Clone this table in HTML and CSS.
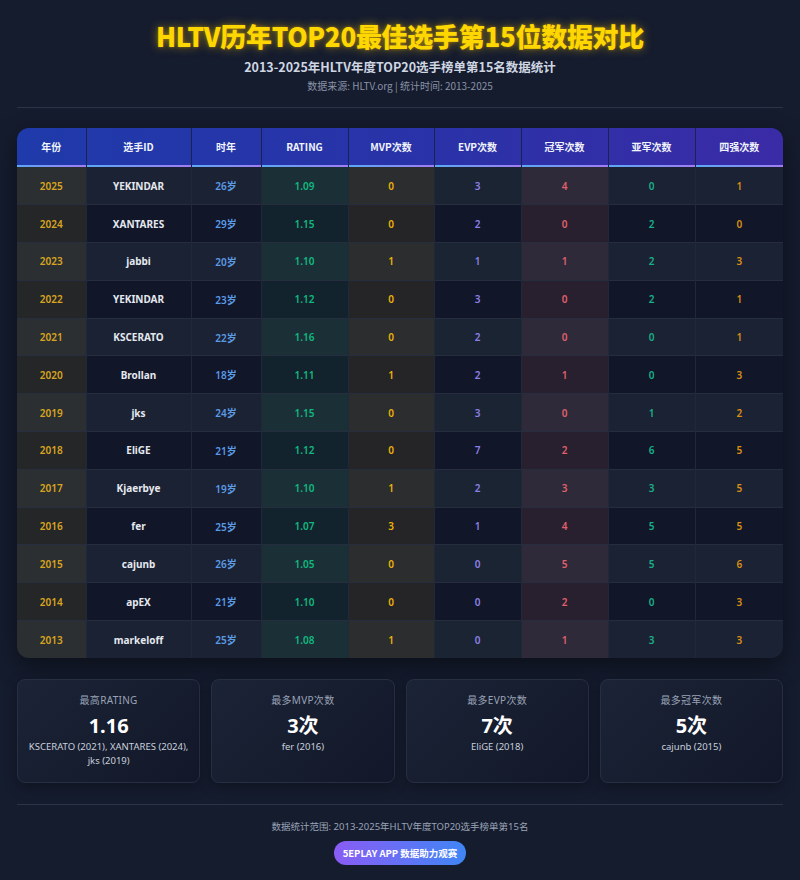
FILE: index.html
```html
<!DOCTYPE html>
<html lang="zh">
<head>
<meta charset="utf-8">
<link rel="stylesheet" href="styles.css">
</head>
<body>
<div class="page">
  <header class="head">
    <h1 class="title">HLTV历年TOP20最佳选手第15位数据对比</h1>
    <div class="subtitle">2013-2025年HLTV年度TOP20选手榜单第15名数据统计</div>
    <div class="source">数据来源: HLTV.org | 统计时间: 2013-2025</div>
  </header>

  <div class="table-wrap">
    <table class="data">
      <thead>
        <tr>
          <th>年份</th><th>选手ID</th><th>时年</th><th>RATING</th><th>MVP次数</th><th>EVP次数</th><th>冠军次数</th><th>亚军次数</th><th>四强次数</th>
        </tr>
      </thead>
      <tbody>
        <tr><td class="c-year">2025</td><td class="c-name">YEKINDAR</td><td class="c-age">26岁</td><td class="c-rt">1.09</td><td class="c-mvp">0</td><td class="c-evp">3</td><td class="c-ch">4</td><td class="c-ru">0</td><td class="c-t4">1</td></tr>
        <tr><td class="c-year">2024</td><td class="c-name">XANTARES</td><td class="c-age">29岁</td><td class="c-rt">1.15</td><td class="c-mvp">0</td><td class="c-evp">2</td><td class="c-ch">0</td><td class="c-ru">2</td><td class="c-t4">0</td></tr>
        <tr><td class="c-year">2023</td><td class="c-name">jabbi</td><td class="c-age">20岁</td><td class="c-rt">1.10</td><td class="c-mvp">1</td><td class="c-evp">1</td><td class="c-ch">1</td><td class="c-ru">2</td><td class="c-t4">3</td></tr>
        <tr><td class="c-year">2022</td><td class="c-name">YEKINDAR</td><td class="c-age">23岁</td><td class="c-rt">1.12</td><td class="c-mvp">0</td><td class="c-evp">3</td><td class="c-ch">0</td><td class="c-ru">2</td><td class="c-t4">1</td></tr>
        <tr><td class="c-year">2021</td><td class="c-name">KSCERATO</td><td class="c-age">22岁</td><td class="c-rt">1.16</td><td class="c-mvp">0</td><td class="c-evp">2</td><td class="c-ch">0</td><td class="c-ru">0</td><td class="c-t4">1</td></tr>
        <tr><td class="c-year">2020</td><td class="c-name">Brollan</td><td class="c-age">18岁</td><td class="c-rt">1.11</td><td class="c-mvp">1</td><td class="c-evp">2</td><td class="c-ch">1</td><td class="c-ru">0</td><td class="c-t4">3</td></tr>
        <tr><td class="c-year">2019</td><td class="c-name">jks</td><td class="c-age">24岁</td><td class="c-rt">1.15</td><td class="c-mvp">0</td><td class="c-evp">3</td><td class="c-ch">0</td><td class="c-ru">1</td><td class="c-t4">2</td></tr>
        <tr><td class="c-year">2018</td><td class="c-name">EliGE</td><td class="c-age">21岁</td><td class="c-rt">1.12</td><td class="c-mvp">0</td><td class="c-evp">7</td><td class="c-ch">2</td><td class="c-ru">6</td><td class="c-t4">5</td></tr>
        <tr><td class="c-year">2017</td><td class="c-name">Kjaerbye</td><td class="c-age">19岁</td><td class="c-rt">1.10</td><td class="c-mvp">1</td><td class="c-evp">2</td><td class="c-ch">3</td><td class="c-ru">3</td><td class="c-t4">5</td></tr>
        <tr><td class="c-year">2016</td><td class="c-name">fer</td><td class="c-age">25岁</td><td class="c-rt">1.07</td><td class="c-mvp">3</td><td class="c-evp">1</td><td class="c-ch">4</td><td class="c-ru">5</td><td class="c-t4">5</td></tr>
        <tr><td class="c-year">2015</td><td class="c-name">cajunb</td><td class="c-age">26岁</td><td class="c-rt">1.05</td><td class="c-mvp">0</td><td class="c-evp">0</td><td class="c-ch">5</td><td class="c-ru">5</td><td class="c-t4">6</td></tr>
        <tr><td class="c-year">2014</td><td class="c-name">apEX</td><td class="c-age">21岁</td><td class="c-rt">1.10</td><td class="c-mvp">0</td><td class="c-evp">0</td><td class="c-ch">2</td><td class="c-ru">0</td><td class="c-t4">3</td></tr>
        <tr><td class="c-year">2013</td><td class="c-name">markeloff</td><td class="c-age">25岁</td><td class="c-rt">1.08</td><td class="c-mvp">1</td><td class="c-evp">0</td><td class="c-ch">1</td><td class="c-ru">3</td><td class="c-t4">3</td></tr>
      </tbody>
    </table>
  </div>

  <section class="stats">
    <div class="card">
      <div class="card-label">最高RATING</div>
      <div class="card-value">1.16</div>
      <div class="card-desc">KSCERATO (2021), XANTARES (2024), jks (2019)</div>
    </div>
    <div class="card">
      <div class="card-label">最多MVP次数</div>
      <div class="card-value">3次</div>
      <div class="card-desc">fer (2016)</div>
    </div>
    <div class="card">
      <div class="card-label">最多EVP次数</div>
      <div class="card-value">7次</div>
      <div class="card-desc">EliGE (2018)</div>
    </div>
    <div class="card">
      <div class="card-label">最多冠军次数</div>
      <div class="card-value">5次</div>
      <div class="card-desc">cajunb (2015)</div>
    </div>
  </section>

  <footer class="foot">
    <div class="foot-text">数据统计范围: 2013-2025年HLTV年度TOP20选手榜单第15名</div>
    <div class="badge">5EPLAY APP 数据助力观赛</div>
  </footer>
</div>
</body>
</html>
```

FILE: styles.css
```css
* { box-sizing: border-box; }
html, body {
  margin: 0;
  padding: 0;
  background: #151c2e;
}
body {
  font-family: "Open Sans", "Noto Sans CJK SC", sans-serif;
  color: #e2e8f0;
  width: 800px;
  height: 880px;
  overflow: hidden;
}
.page {
  padding: 0 17px;
}
.head {
  text-align: center;
  padding-top: 19px;
  padding-bottom: 13px;
  border-bottom: 1px solid #2a3348;
}
.title {
  margin: 0;
  font-family: "Noto Sans CJK SC", sans-serif;
  font-size: 26px;
  font-weight: 900;
  line-height: 34px;
  color: #ffd700;
  text-shadow: 0 0 10px rgba(255, 200, 0, 0.55), 0 0 3px rgba(255, 180, 0, 0.4);
  letter-spacing: -0.3px;
}
.subtitle {
  margin-top: 5px;
  font-family: "Noto Sans CJK SC", sans-serif;
  font-size: 12.5px;
  font-weight: 700;
  line-height: 18px;
  color: #cfd6e2;
}
.source {
  margin-top: 2px;
  font-family: "Noto Sans CJK SC", sans-serif;
  font-size: 10px;
  line-height: 16px;
  color: #8a93a6;
}

.table-wrap {
  margin-top: 20px;
  border-radius: 12px;
  overflow: hidden;
  background: #141a2b;
  box-shadow: 0 8px 24px rgba(0, 0, 0, 0.45);
}
.data {
  width: 100%;
  border-collapse: collapse;
  table-layout: fixed;
  font-family: "Noto Sans", "Noto Sans CJK SC", sans-serif;
}
.data th:nth-child(1) { width: 69px; }
.data th:nth-child(2) { width: 105px; }
.data th:nth-child(3) { width: 70px; }
.data th:nth-child(4) { width: 87px; }
.data th:nth-child(5) { width: 86px; }
.data th:nth-child(6) { width: 87px; }
.data th:nth-child(7) { width: 87px; }
.data th:nth-child(8) { width: 87px; }
.data th:nth-child(9) { width: 88px; }

.data thead tr {
  background: linear-gradient(90deg, #1f3aaa 0%, #2a32a8 55%, #3a2ba6 100%);
}
.data th {
  height: 39px;
  padding: 0 0 2px;
  font-family: "Noto Sans CJK SC", sans-serif;
  font-size: 10px;
  font-weight: 700;
  color: #f1f4fb;
  text-align: center;
  border-left: 1px solid #1a2350;
  background-image: linear-gradient(90deg, #5aa9f5, #a27cf3);
  background-size: 100% 2px;
  background-position: bottom left;
  background-repeat: no-repeat;
}
.data th:first-child { border-left: none; }

.data td {
  height: 37.8px;
  padding: 0;
  text-align: center;
  font-size: 10px;
  font-weight: 600;
  border-top: 1px solid #262d3e;
  border-left: 1px solid #20283a;
}
.data td:first-child { border-left: none; }
.data tbody tr:first-child td { border-top: none; }
.data tbody tr:nth-child(odd) td { background-color: #1b2233; }
.data tbody tr:nth-child(even) td { background-color: #111629; }

.data tbody tr:nth-child(odd) .c-year { background-color: #2b2f31; }
.data tbody tr:nth-child(even) .c-year { background-color: #252628; }
.data tbody tr:nth-child(odd) .c-rt { background-color: #1b3036; }
.data tbody tr:nth-child(even) .c-rt { background-color: #13232d; }
.data tbody tr:nth-child(odd) .c-mvp { background-color: #2b2d2f; }
.data tbody tr:nth-child(even) .c-mvp { background-color: #252527; }
.data tbody tr:nth-child(odd) .c-evp { background-color: #1b2433; }
.data tbody tr:nth-child(even) .c-evp { background-color: #111629; }
.data tbody tr:nth-child(odd) .c-ch { background-color: #2e2a39; }
.data tbody tr:nth-child(even) .c-ch { background-color: #281f2f; }

.c-year { color: #d9a520; }
.c-name { color: #e4e8ef; }
.data .c-name { font-weight: 700; }
.c-age { color: #5b9be6; }
.c-rt { color: #10b981; }
.c-mvp { color: #eab308; }
.c-evp { color: #8b80e6; }
.c-ch { color: #e0606c; }
.c-ru { color: #18b088; }
.c-t4 { color: #d98e14; }

.stats {
  margin-top: 21px;
  display: grid;
  grid-template-columns: repeat(4, 1fr);
  gap: 11px;
}
.card {
  height: 104px;
  border-radius: 8px;
  border: 1px solid #262e42;
  background: linear-gradient(135deg, #1b2336 0%, #121829 100%);
  box-shadow: 0 4px 14px rgba(0, 0, 0, 0.3);
  text-align: center;
  padding: 13px 10px 0;
  font-family: "Noto Sans", "Noto Sans CJK SC", sans-serif;
}
.card-label {
  font-size: 10px;
  line-height: 14px;
  color: #9aa3b6;
  letter-spacing: 0.3px;
}
.card-value {
  margin-top: 6px;
  font-size: 20px;
  font-weight: 700;
  line-height: 26px;
  color: #ffffff;
}
.card-desc {
  margin-top: 1px;
  font-size: 9.5px;
  line-height: 14px;
  color: #c9d0dc;
}

.foot {
  margin-top: 21px;
  border-top: 1px solid #2a3348;
  text-align: center;
  padding-top: 15px;
  font-family: "Noto Sans", "Noto Sans CJK SC", sans-serif;
}
.foot-text {
  font-size: 9.5px;
  line-height: 14px;
  color: #9aa3b6;
}
.badge {
  display: inline-block;
  margin-top: 7px;
  height: 24px;
  line-height: 24px;
  padding: 0 9px;
  border-radius: 12px;
  background: linear-gradient(90deg, #8a5cf5, #3f86f5);
  color: #ffffff;
  font-size: 9.5px;
  font-weight: 700;
  font-family: "Noto Sans CJK SC", sans-serif;
}
```
